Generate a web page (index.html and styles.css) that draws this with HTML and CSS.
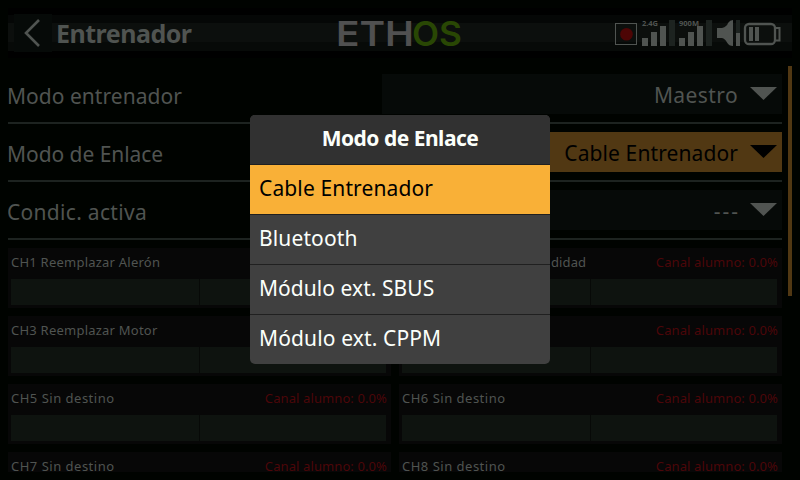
FILE: index.html
```html
<!DOCTYPE html>
<html lang="es">
<head>
<meta charset="utf-8">
<title>Entrenador</title>
<link rel="stylesheet" href="styles.css">
</head>
<body>
<div class="screen">
  <header class="topbar">
    <div class="back"><svg width="38" height="38" viewBox="0 0 38 38"><path d="M25 6 12 19l13 13" fill="none" stroke="#505451" stroke-width="2.600"/></svg></div>
    <h1 class="title">Entrenador</h1>
    <svg class="logo" width="126" height="44" viewBox="0 -7 126 44">
      <text y="27.500" class="logo-text"><tspan x="-2" textLength="78" lengthAdjust="spacingAndGlyphs" fill="#505050">ETH</tspan><tspan x="74" textLength="50" lengthAdjust="spacingAndGlyphs" fill="#294704">OS</tspan></text>
    </svg>
    <svg class="status" width="168" height="30" viewBox="614 18 168 30">
      <rect x="615.500" y="23.500" width="21" height="21" fill="none" stroke="#505451"/>
      <circle cx="626.500" cy="34.300" r="6.300" fill="#4d0505"/>
      <g fill="#505451">
        <path d="M642 38h6v8h-6zM651 32h6v14h-6zM660 26h6v20h-6zM679 38h6v8h-6zM688 32h6v14h-6zM697 26h6v20h-6z"/>
        <path d="M717 28h5q5-1.500 6-5 2-3 5-3v26q-4 0-6-3.500-2-4-5-4.500h-5zM736 33h4v13h-4z"/>
        <path d="M749 27h4v14h-4zM755 27h4v14h-4z"/>
        <text x="642" y="26" class="band" textLength="16">2.4G</text>
        <text x="679" y="26" class="band" textLength="20">900M</text>
      </g>
      <path fill="#1d2320" d="M669 20h6v26h-6zM706 20h6v26h-6zM736 20h4v13h-4z"/>
      <rect x="745" y="24" width="30" height="20" rx="4" fill="none" stroke="#505451" stroke-width="2.300"/>
      <path d="M775.500 28h4v12.500h-4" fill="none" stroke="#505451" stroke-width="2"/>
    </svg>
  </header>

  <main class="content">
    <section class="form">
      <div class="row"><span class="label">Modo entrenador</span><div class="field"><span class="v1">Maestro</span><i class="arrow"></i></div></div>
      <div class="row"><span class="label l2">Modo de Enlace</span><div class="field active"><span class="v2">Cable Entrenador</span><i class="arrow"></i></div></div>
      <div class="row"><span class="label l3">Condic. activa</span><div class="field"><span class="v3">---</span><i class="arrow"></i></div></div>
    </section>
    <section class="channels">
      <div class="card"><div class="info"><span class="n1">CH1 Reemplazar Alerón</span></div><div class="meter"></div></div>
      <div class="card"><div class="info"><span class="tail">didad</span><span class="student">Canal alumno: 0.0%</span></div><div class="meter"></div></div>
      <div class="card"><div class="info"><span class="n1">CH3 Reemplazar Motor</span></div><div class="meter"></div></div>
      <div class="card"><div class="info"><span></span><span class="student">Canal alumno: 0.0%</span></div><div class="meter"></div></div>
      <div class="card"><div class="info"><span>CH5 Sin destino</span><span class="student">Canal alumno: 0.0%</span></div><div class="meter"></div></div>
      <div class="card"><div class="info"><span>CH6 Sin destino</span><span class="student">Canal alumno: 0.0%</span></div><div class="meter"></div></div>
      <div class="card"><div class="info"><span>CH7 Sin destino</span><span class="student">Canal alumno: 0.0%</span></div><div class="meter"></div></div>
      <div class="card"><div class="info"><span>CH8 Sin destino</span><span class="student">Canal alumno: 0.0%</span></div><div class="meter"></div></div>
    </section>
  </main>
  <div class="scrollbar"></div>

  <div class="popup">
    <h2 class="popup-title">Modo de Enlace</h2>
    <div class="option selected">Cable Entrenador</div>
    <div class="option o2">Bluetooth</div>
    <div class="option o3">Módulo ext. SBUS</div>
    <div class="option o4">Módulo ext. CPPM</div>
  </div>
</div>
</body>
</html>
```
FILE: styles.css
```css
* { box-sizing: border-box; }
body { margin: 0; background: #000300; }
.screen {
  position: relative;
  width: 800px;
  height: 480px;
  overflow: hidden;
  background: #000300;
  color: #505451;
  font-family: "Noto Sans", sans-serif;
  font-size: 21px;
  white-space: nowrap;
}
.topbar {
  display: flex;
  align-items: center;
  height: 50px;
  margin: 8px 8px 0;
  padding: 0 0 0 6px;
  background: linear-gradient(#000 0 7px, #050706 7px 15px, #0c0f0d 15px 34px, #070a08 34px 43px, #000 43px);
}
.back { width: 38px; height: 38px; background: #060a08; }
.back svg { display: block; }
.title { width: 282px; margin: 0 0 0 4px; font-size: 25px; line-height: 38px; font-weight: 700; letter-spacing: -.5px; }
.logo { display: block; overflow: visible; }
.logo-text { font-family: Inter, sans-serif; font-size: 34.500px; font-weight: 600; }
.status { display: block; margin: 0 0 0 150px; }
.band { font-size: 7.500px; font-weight: 700; }

.content { width: 774px; height: 414px; margin-left: 8px; overflow: hidden; }
.row {
  display: flex;
  justify-content: space-between;
  align-items: center;
  height: 58px;
  padding-top: 2px;
  border-bottom: 2px solid #1d2320;
}
.form { padding-top: 8px; }
.label { margin-left: -1px; padding-top: 1px; letter-spacing: .03px; }
.l2 { letter-spacing: -.05px; }
.l3 { letter-spacing: .3px; }
.field {
  display: flex;
  justify-content: flex-end;
  align-items: center;
  width: 400px;
  height: 40px;
  margin-top: -2px;
  padding-right: 5px;
  background: #060a08;
}
.field span { padding-top: 2px; }
.v1 { letter-spacing: .4px; }
.v2 { letter-spacing: .1px; }
.v3 { letter-spacing: 2px; }
.active { background: #513813; color: #000; }
.arrow { width: 27px; height: 13px; margin: 0 0 1px 12px; background: currentColor; clip-path: polygon(0 0, 100% 0, 50% 100%); }
.v3 + .arrow { margin-left: 10px; }
.channels { display: grid; grid-template-columns: 383px 383px; gap: 8px; margin-top: 8px; }
.card { height: 60px; padding: 0 5px 0 3px; background: #070707; }
.info { display: flex; justify-content: space-between; height: 31px; font-size: 13px; line-height: 28px; letter-spacing: .5px; }
.n1 { letter-spacing: .23px; }
.student { color: #4c0609; margin-right: -1px; letter-spacing: .1px; }
.tail { margin-left: 149px; letter-spacing: .1px; }
.meter { height: 26px; background: linear-gradient(90deg, #0e130f 188px, #070907 188px 189px, #0e130f 189px); }
.scrollbar { position: absolute; left: 788px; top: 66px; width: 4px; height: 230px; background: #513813; }

.popup {
  position: absolute;
  left: 250px;
  top: 115px;
  width: 300px;
  height: 249px;
  overflow: hidden;
  border-radius: 5px;
  background: #404040;
  color: #fbfffb;
}
.popup-title { height: 50px; margin: 0; background: #313131; border-bottom: 1px solid #202020; font-size: 21px; line-height: 47px; text-align: center; letter-spacing: -.5px; }
.option { height: 50px; padding-left: 9px; border-bottom: 1px solid #202020; line-height: 47px; letter-spacing: .13px; }
.o3 { letter-spacing: .05px; }
.selected { background: #f9b037; color: #000; }
```
